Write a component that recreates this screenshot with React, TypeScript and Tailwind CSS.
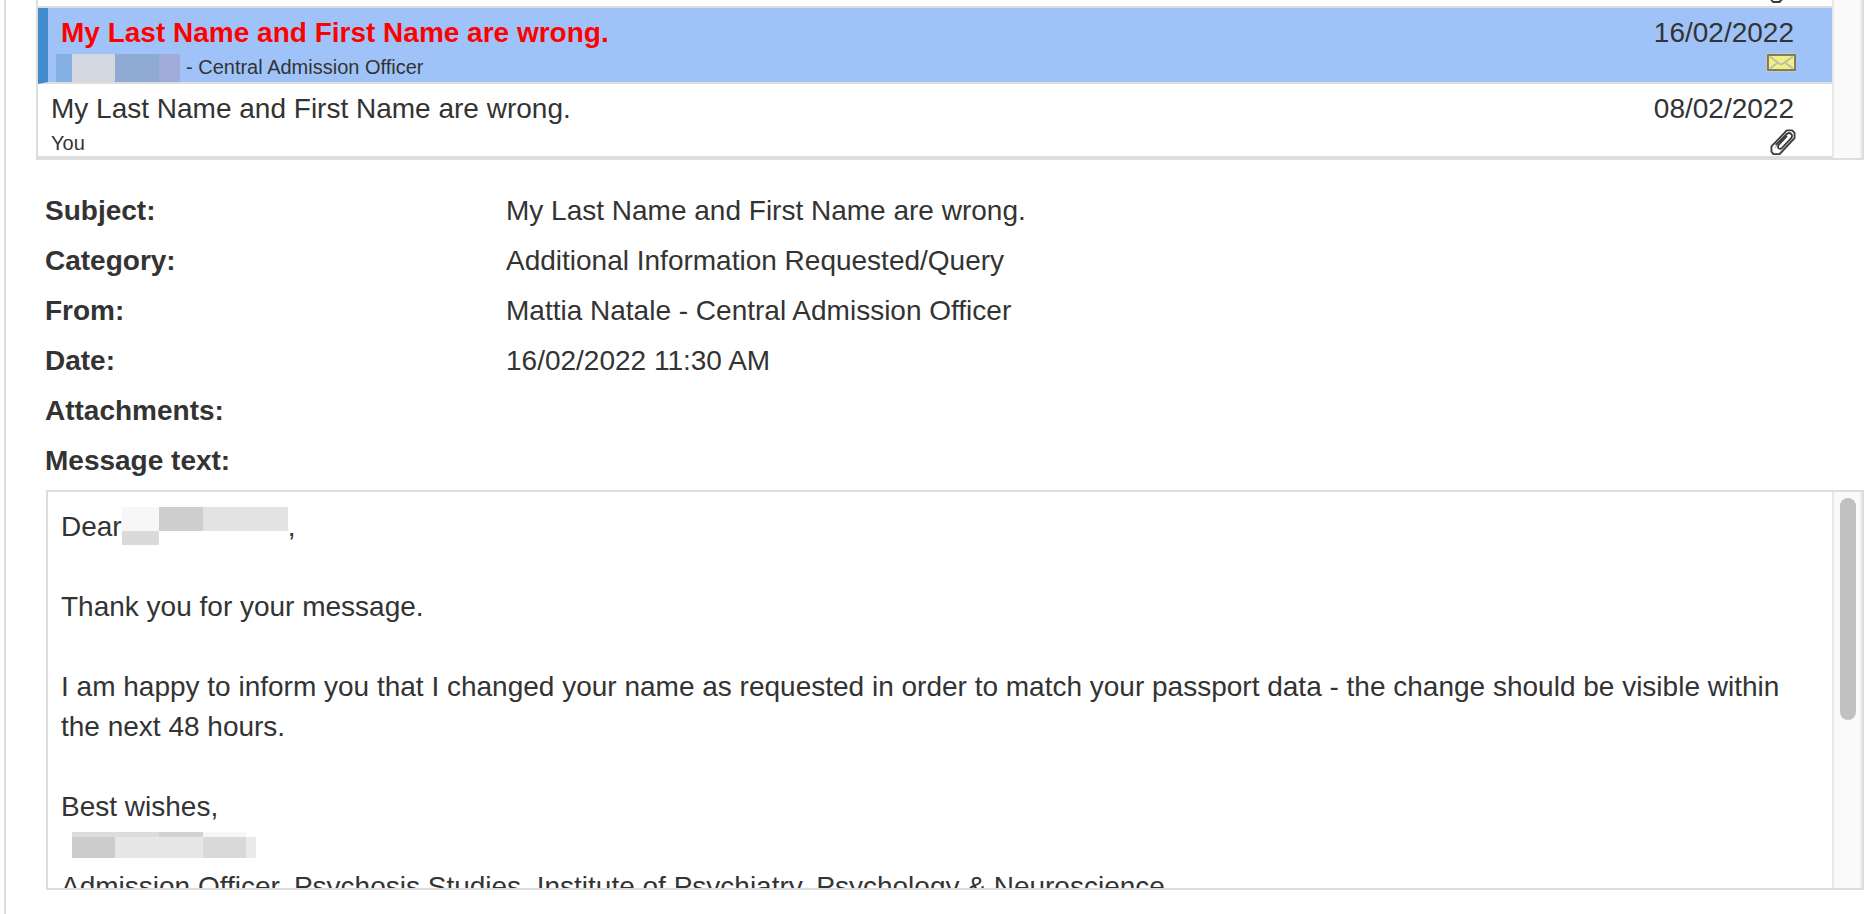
import React from "react";

type Block = { x: number; y: number; w: number; h: number; fill: string };

function Redaction({ width, height, blocks }: { width: number; height: number; blocks: Block[] }) {
  return (
    <svg width={width} height={height} viewBox={`0 0 ${width} ${height}`} shapeRendering="crispEdges" aria-hidden="true">
      {blocks.map((b, i) => (
        <rect key={i} x={b.x} y={b.y} width={b.w} height={b.h} fill={b.fill} />
      ))}
    </svg>
  );
}

const senderBlocks: Block[] = [
  { x: 0, y: 0, w: 16, h: 28, fill: "#83afe2" },
  { x: 16, y: 0, w: 43, h: 28, fill: "#d2d7e0" },
  { x: 59, y: 0, w: 44, h: 28, fill: "#8fabd4" },
  { x: 103, y: 0, w: 21, h: 28, fill: "#a0abda" },
];

const recipientBlocks: Block[] = [
  { x: 0, y: 0, w: 37, h: 24, fill: "#f7f7f7" },
  { x: 37, y: 0, w: 44, h: 24, fill: "#cecece" },
  { x: 81, y: 0, w: 85, h: 24, fill: "#e3e3e3" },
  { x: 0, y: 24, w: 37, h: 14, fill: "#dadada" },
];

const signatureBlocks: Block[] = [
  { x: 0, y: 0, w: 87, h: 5, fill: "#dcdcdc" },
  { x: 87, y: 0, w: 44, h: 5, fill: "#d2d2d2" },
  { x: 131, y: 0, w: 43, h: 5, fill: "#f6f6f6" },
  { x: 0, y: 5, w: 43, h: 21, fill: "#cdcdcd" },
  { x: 43, y: 5, w: 88, h: 21, fill: "#e7e7e7" },
  { x: 131, y: 5, w: 43, h: 21, fill: "#d9d9d9" },
  { x: 174, y: 5, w: 10, h: 21, fill: "#eaeaea" },
];

function EnvelopeIcon() {
  return (
    <svg width="30" height="20" viewBox="0 0 30 20" role="img" aria-label="Unread message">
      <rect width="30" height="19" fill="#c8cbb4" />
      <rect x="2" y="2" width="27" height="15" fill="#f1f083" stroke="#66665c" strokeWidth="1.6" />
      <path d="M4 3.500l9 7q2 1.500 4 0l10-7M4 15.500l8-6M27 15.500l-8-6" fill="none" stroke="#bcbcae" strokeWidth="1.800" />
    </svg>
  );
}

function PaperclipIcon() {
  return (
    <svg width="26" height="28" viewBox="0 0 26 28" role="img" aria-label="Has attachment" fill="none" strokeLinecap="round" strokeLinejoin="round">
      <path d="M23.500 10L9.500 25M18 5L5 19" stroke="#c4c4c4" strokeWidth="1.500" />
      <path
        d="M17 1.500h5.500L25 4v5.500L9.500 26H3l-2-2.500v-5.500z M16.500 8L8.500 16.500c-2 3 1 5.500 3.500 3L21.500 9.500c2.500-4-1.500-7-5-4L6 16"
        stroke="#3c3c3c"
        strokeWidth="1.900"
      />
    </svg>
  );
}

const details = [
  { label: "Subject:", value: "My Last Name and First Name are wrong." },
  { label: "Category:", value: "Additional Information Requested/Query" },
  { label: "From:", value: "Mattia Natale - Central Admission Officer" },
  { label: "Date:", value: "16/02/2022 11:30 AM" },
  { label: "Attachments:", value: "" },
  { label: "Message text:", value: "" },
];

function Track({ thumb }: { thumb?: boolean }) {
  return (
    <div className="flex w-[30px] shrink-0 justify-end border-x-2 border-l-[#e8e8e8] border-r-[#ededed] bg-[#fafafa] pr-1 pt-1.5">
      {thumb && <div className="h-[222px] w-4 rounded-full bg-[#c1c1c1]" />}
    </div>
  );
}

export default function App() {
  return (
    <div className="ml-1 h-screen overflow-hidden border-l-2 border-[#ddd] bg-white pl-[30px] pr-3 font-['Liberation_Sans',Arial,sans-serif] text-[28px] leading-10 text-[#333]">
      <section className="flex border-x-2 border-b-2 border-[#ddd]" aria-label="Messages">
        <ul className="min-w-0 flex-1">
          <li className="flex h-2 items-end overflow-hidden border-b-2 border-[#ddd] pl-[13px] pr-9 text-xl leading-[26px]">
            <span className="flex-1">Admissions Central Admission Officer</span>
            <span className="pb-0.5"><PaperclipIcon /></span>
          </li>
          <li className="flex h-19 border-b-2 border-l-[10px] border-b-[#ddd] border-l-[#428bca] bg-[#9fc3f8] pr-9">
            <div className="flex-1">
              <a href="#message-1" className="block h-[46px] pl-[13px] pt-[5px] font-bold text-[#f00]">My Last Name and First Name are wrong.</a>
              <div className="flex h-7 gap-1.5 pl-2 text-xl leading-[26px]">
                <Redaction width={124} height={28} blocks={senderBlocks} />
                <span>- Central Admission Officer</span>
              </div>
            </div>
            <div className="flex flex-col items-end pt-[5px]">
              <time className="pr-0.5">16/02/2022</time>
              <EnvelopeIcon />
            </div>
          </li>
          <li className="flex h-[74px] border-b-2 border-[#ddd] pl-[13px] pr-9">
            <div className="flex-1">
              <a href="#message-2" className="block pt-[5px]">My Last Name and First Name are wrong.</a>
              <div className="text-xl leading-7">You</div>
            </div>
            <div className="flex flex-col items-end pt-[5px]">
              <time className="pr-0.5">08/02/2022</time>
              <PaperclipIcon />
            </div>
          </li>
        </ul>
        <Track />
      </section>

      <dl className="pl-[9px] pt-[26px]">
        {details.map((d) => (
          <div key={d.label} className="flex h-[50px] items-center">
            <dt className="w-[461px] shrink-0 font-bold">{d.label}</dt>
            <dd>{d.value}</dd>
          </div>
        ))}
      </dl>

      <section className="ml-2.5 mt-1 flex h-[400px] overflow-hidden border-2 border-[#ddd]" aria-label="Message text">
        <div className="min-w-0 flex-1 pl-[13px] pr-6 pt-[15px]">
          <div className="flex h-10 items-start">
            <span>Dear</span>
            <Redaction width={166} height={38} blocks={recipientBlocks} />
            <span>,</span>
          </div>
          <p className="mt-10">Thank you for your message.</p>
          <p className="mt-10">
            I am happy to inform you that I changed your name as requested in order to match your passport data - the change should be visible within the next 48 hours.
          </p>
          <p className="mt-10">Best wishes,</p>
          <div className="flex h-10 pl-[11px] pt-[5px]">
            <Redaction width={184} height={26} blocks={signatureBlocks} />
          </div>
          <p>Admission Officer, Psychosis Studies, Institute of Psychiatry, Psychology &amp; Neuroscience</p>
        </div>
        <Track thumb />
      </section>
    </div>
  );
}
